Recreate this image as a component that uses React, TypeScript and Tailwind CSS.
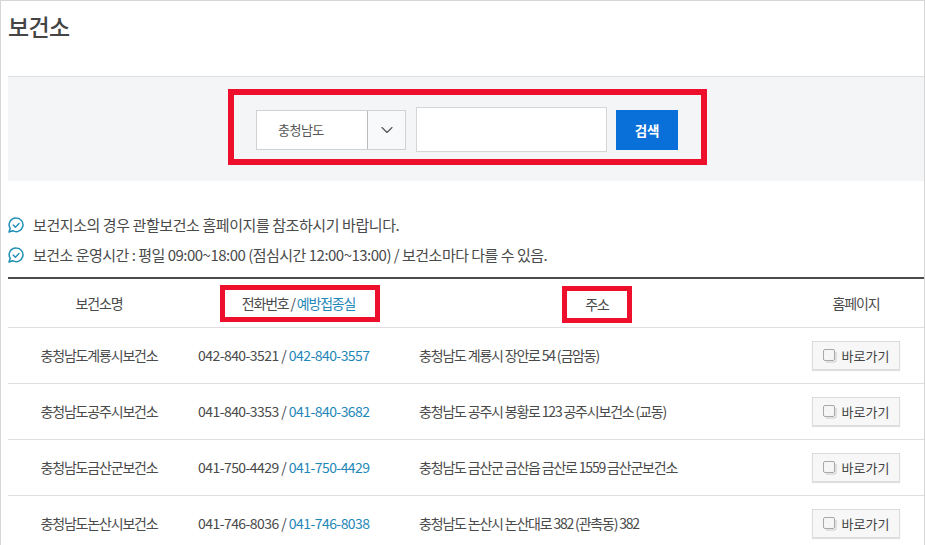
import { ChevronDown } from 'lucide-react'

const font = { fontFamily: '"Noto Sans CJK KR", "Noto Sans", sans-serif' }

const rows = [
  { name: '충청남도계룡시보건소', tel: '042-840-3521', vac: '042-840-3557', addr: '충청남도 계룡시 장안로 54 (금암동)' },
  { name: '충청남도공주시보건소', tel: '041-840-3353', vac: '041-840-3682', addr: '충청남도 공주시 봉황로 123 공주시보건소 (교동)' },
  { name: '충청남도금산군보건소', tel: '041-750-4429', vac: '041-750-4429', addr: '충청남도 금산군 금산읍 금산로 1559 금산군보건소' },
  { name: '충청남도논산시보건소', tel: '041-746-8036', vac: '041-746-8038', addr: '충청남도 논산시 논산대로 382 (관촉동) 382' },
]

function CheckBubble() {
  return (
    <svg width="16" height="16" viewBox="0 0 16 16" fill="none" className="shrink-0">
      <path d="M8.2 1a6.8 6.8 0 1 1-3.4 12.7L1 15l1.2-3.6A6.8 6.8 0 0 1 8.2 1z" stroke="#1f8fb5" strokeWidth="1.5" strokeLinejoin="round" />
      <path d="M5.2 8l2.2 2.2 3.6-3.8" stroke="#1f8fb5" strokeWidth="1.4" strokeLinecap="round" strokeLinejoin="round" />
    </svg>
  )
}

function PageIcon() {
  return (
    <svg width="14" height="14" viewBox="0 0 14 14" fill="none" className="shrink-0">
      <rect x="0.5" y="0.5" width="11" height="11" rx="1.5" fill="#f6f6f6" stroke="#a8a8a8" />
      <path d="M13 3v8.5a1.5 1.5 0 0 1-1.5 1.5H3" stroke="#c8c8c8" />
    </svg>
  )
}

export default function App() {
  return (
    <div className="w-[925px] h-[545px] overflow-hidden bg-white border-t border-l border-r border-[#d6d6d6] pl-[7px] text-[#4a4a4a]" style={font}>
      {/* 제목 */}
      <h1 className="h-[75px] pt-[7px] text-[23px] leading-[36px] font-medium text-[#444] tracking-[-0.03em]">보건소</h1>

      {/* 검색 */}
      <div className="h-[105px] bg-[#f4f5f7] border-t border-[#dcdfe2] flex justify-center pt-[12px] pl-[3px]">
        <div className="w-[479px] h-[76px] border-[6px] border-[#ee0f2d] flex items-center pl-[22px] pt-[6px]">
          <div className="w-[150px] h-[40px] bg-white border border-[#cfd2d5] flex items-center">
            <span className="w-[111px] h-full flex items-center pl-[21px] text-[13px] tracking-[-0.04em] text-[#555] border-r border-[#b9bcbf]">충청남도</span>
            <span className="flex-1 flex justify-center bg-[#f8f9fa] h-full items-center">
              <ChevronDown size={20} strokeWidth={1.4} className="text-[#555]" />
            </span>
          </div>
          <div className="w-[191px] h-[45px] ml-[10px] -mt-[1px] bg-white border border-[#d4d6d8]" />
          <button className="w-[62px] h-[40px] ml-[9px] bg-[#0a70d9] text-white text-[13.5px] font-bold tracking-[-0.02em]">검색</button>
        </div>
      </div>

      {/* 안내 */}
      <div className="h-[96px] pt-[29px] text-[15px] text-[#4a4a4a]">
        <div className="h-[30px] flex items-center gap-[9px]">
          <CheckBubble />
          <span className="tracking-[-0.028em]">보건지소의 경우 관할보건소 홈페이지를 참조하시기 바랍니다.</span>
        </div>
        <div className="h-[30px] flex items-center gap-[9px]">
          <CheckBubble />
          <span className="tracking-[-0.034em]">보건소 운영시간 : 평일 09:00~18:00 (점심시간 12:00~13:00) / 보건소마다 다를 수 있음.</span>
        </div>
      </div>

      {/* 표 */}
      <div className="border-t-2 border-[#4b4b4b] text-[14px] tracking-[-0.085em]">
        <div className="h-[49px] grid grid-cols-[182px_216px_384px_132px] items-center text-center border-b border-[#dedede]">
          <div>보건소명</div>
          <div className="flex justify-center">
            <span className="w-[160px] h-[37px] ml-[4px] border-[5px] border-[#ee0f2d] flex items-center justify-center pr-[3px]">
              전화번호 / <span className="text-[#1f88b8] ml-[2px]">예방접종실</span>
            </span>
          </div>
          <div className="flex justify-center">
            <span className="w-[70px] h-[37px] mr-[2px] mt-[2px] border-[5px] border-[#ee0f2d] flex items-center justify-center">주소</span>
          </div>
          <div>홈페이지</div>
        </div>
        {rows.map((r) => (
          <div key={r.name} className="h-[56px] grid grid-cols-[182px_216px_384px_132px] items-center border-b border-[#dedede]">
            <div className="text-center">{r.name}</div>
            <div className="pl-[8px] tracking-[-0.04em]">
              {r.tel} / <span className="text-[#1f88b8]">{r.vac}</span>
            </div>
            <div className="pl-[13px]">{r.addr}</div>
            <div className="flex justify-center">
              <span className="w-[88px] h-[29px] bg-[#f7f7f7] border border-[#dcdcdc] shadow-[0_1px_1px_rgba(0,0,0,0.12)] flex items-center justify-center gap-[5px] text-[13px] tracking-normal text-[#444]">
                <PageIcon />
                바로가기
              </span>
            </div>
          </div>
        ))}
      </div>
    </div>
  )
}
